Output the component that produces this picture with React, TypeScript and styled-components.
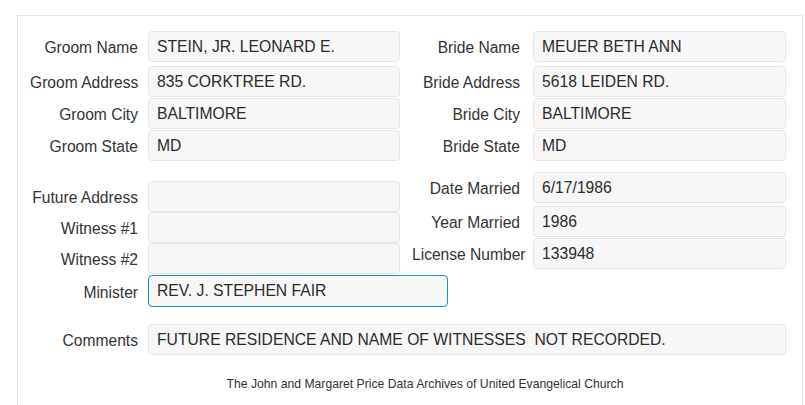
import * as React from 'react'
import styled, { createGlobalStyle } from 'styled-components'

const GlobalStyle = createGlobalStyle`
  html, body {
    margin: 0;
    padding: 0;
    background: #fff;
  }
  body {
    font-family: 'Liberation Sans', Arial, sans-serif;
    color: #333;
  }
`

const Page = styled.div`
  padding: 15px 2px 0 17px;
  height: 405px;
  overflow: hidden;
  box-sizing: border-box;
`

const Panel = styled.div`
  border: 1px solid #e6e6e6;
  border-bottom: none;
  min-height: 420px;
  padding: 15px 16px 0 0;
`

const Columns = styled.div<{ $top?: number }>`
  display: grid;
  grid-template-columns: 382px 386px;
  align-items: start;
  margin-top: ${(p) => p.$top ?? 0}px;
`

const Stack = styled.div<{ $pad?: number }>`
  display: flex;
  flex-direction: column;
  padding-top: ${(p) => p.$pad ?? 0}px;
`

const Row = styled.div<{ $gap: number; $after?: number }>`
  display: flex;
  align-items: center;
  column-gap: ${(p) => p.$gap}px;
  margin-bottom: ${(p) => p.$after ?? 0}px;
`

const Label = styled.label`
  flex: none;
  width: 108px;
  margin-left: 12px;
  padding-top: 3px;
  text-align: right;
  white-space: nowrap;
  font-size: 15.6px;
  color: #333;
`

const Input = styled.div<{ $width?: number; $focused?: boolean; $height?: number }>`
  box-sizing: border-box;
  width: ${(p) => (p.$width ? `${p.$width}px` : 'auto')};
  flex: ${(p) => (p.$width ? 'none' : '1')};
  height: ${(p) => p.$height ?? 31}px;
  display: flex;
  align-items: center;
  padding: 0 8px;
  background: #f7f7f7;
  border: 1px solid ${(p) => (p.$focused ? '#1b8fd2' : '#e6e6e6')};
  border-radius: 4px;
  font-size: 15.7px;
  color: #2b2b2b;
  white-space: nowrap;
  overflow: hidden;
`

const Footer = styled.div`
  margin-top: 22px;
  padding-left: 46px;
  text-align: center;
  font-size: 12.2px;
  color: #333;
`

type FieldProps = {
  label: string
  value?: string
  gap?: number
  after?: number
  width?: number
  height?: number
  focused?: boolean
}

const Field = ({ label, value = '', gap = 10, after, width, height, focused }: FieldProps) => (
  <Row $gap={gap} $after={after}>
    <Label>{label}</Label>
    <Input $width={width} $height={height} $focused={focused}>
      {value}
    </Input>
  </Row>
)

export default function App() {
  return (
    <>
      <GlobalStyle />
      <Page>
        <Panel>
          <Columns>
            <Stack>
              <Field label="Groom Name" value="STEIN, JR. LEONARD E." after={4} />
              <Field label="Groom Address" value="835 CORKTREE RD." after={1} />
              <Field label="Groom City" value="BALTIMORE" after={1} />
              <Field label="Groom State" value="MD" />
            </Stack>
            <Stack>
              <Field label="Bride Name" value="MEUER BETH ANN" gap={13} after={4} />
              <Field label="Bride Address" value="5618 LEIDEN RD." gap={13} after={1} />
              <Field label="Bride City" value="BALTIMORE" gap={13} after={1} />
              <Field label="Bride State" value="MD" gap={13} />
            </Stack>
          </Columns>
          <Columns>
            <Stack $pad={20}>
              <Field label="Future Address" />
              <Field label="Witness #1" />
              <Field label="Witness #2" after={1} />
              <Field label="Minister" value="REV. J. STEPHEN FAIR" width={300} height={32} focused />
            </Stack>
            <Stack $pad={11}>
              <Field label="Date Married" value="6/17/1986" gap={13} after={3} />
              <Field label="Year Married" value="1986" gap={13} after={1} />
              <Field label="License Number" value="133948" gap={13} />
            </Stack>
          </Columns>
          <Columns $top={17}>
            <Row $gap={10} style={{ gridColumn: '1 / 3' }}>
              <Label>Comments</Label>
              <Input>FUTURE RESIDENCE AND NAME OF WITNESSES&nbsp; NOT RECORDED.</Input>
            </Row>
          </Columns>
          <Footer>The John and Margaret Price Data Archives of United Evangelical Church</Footer>
        </Panel>
      </Page>
    </>
  )
}
